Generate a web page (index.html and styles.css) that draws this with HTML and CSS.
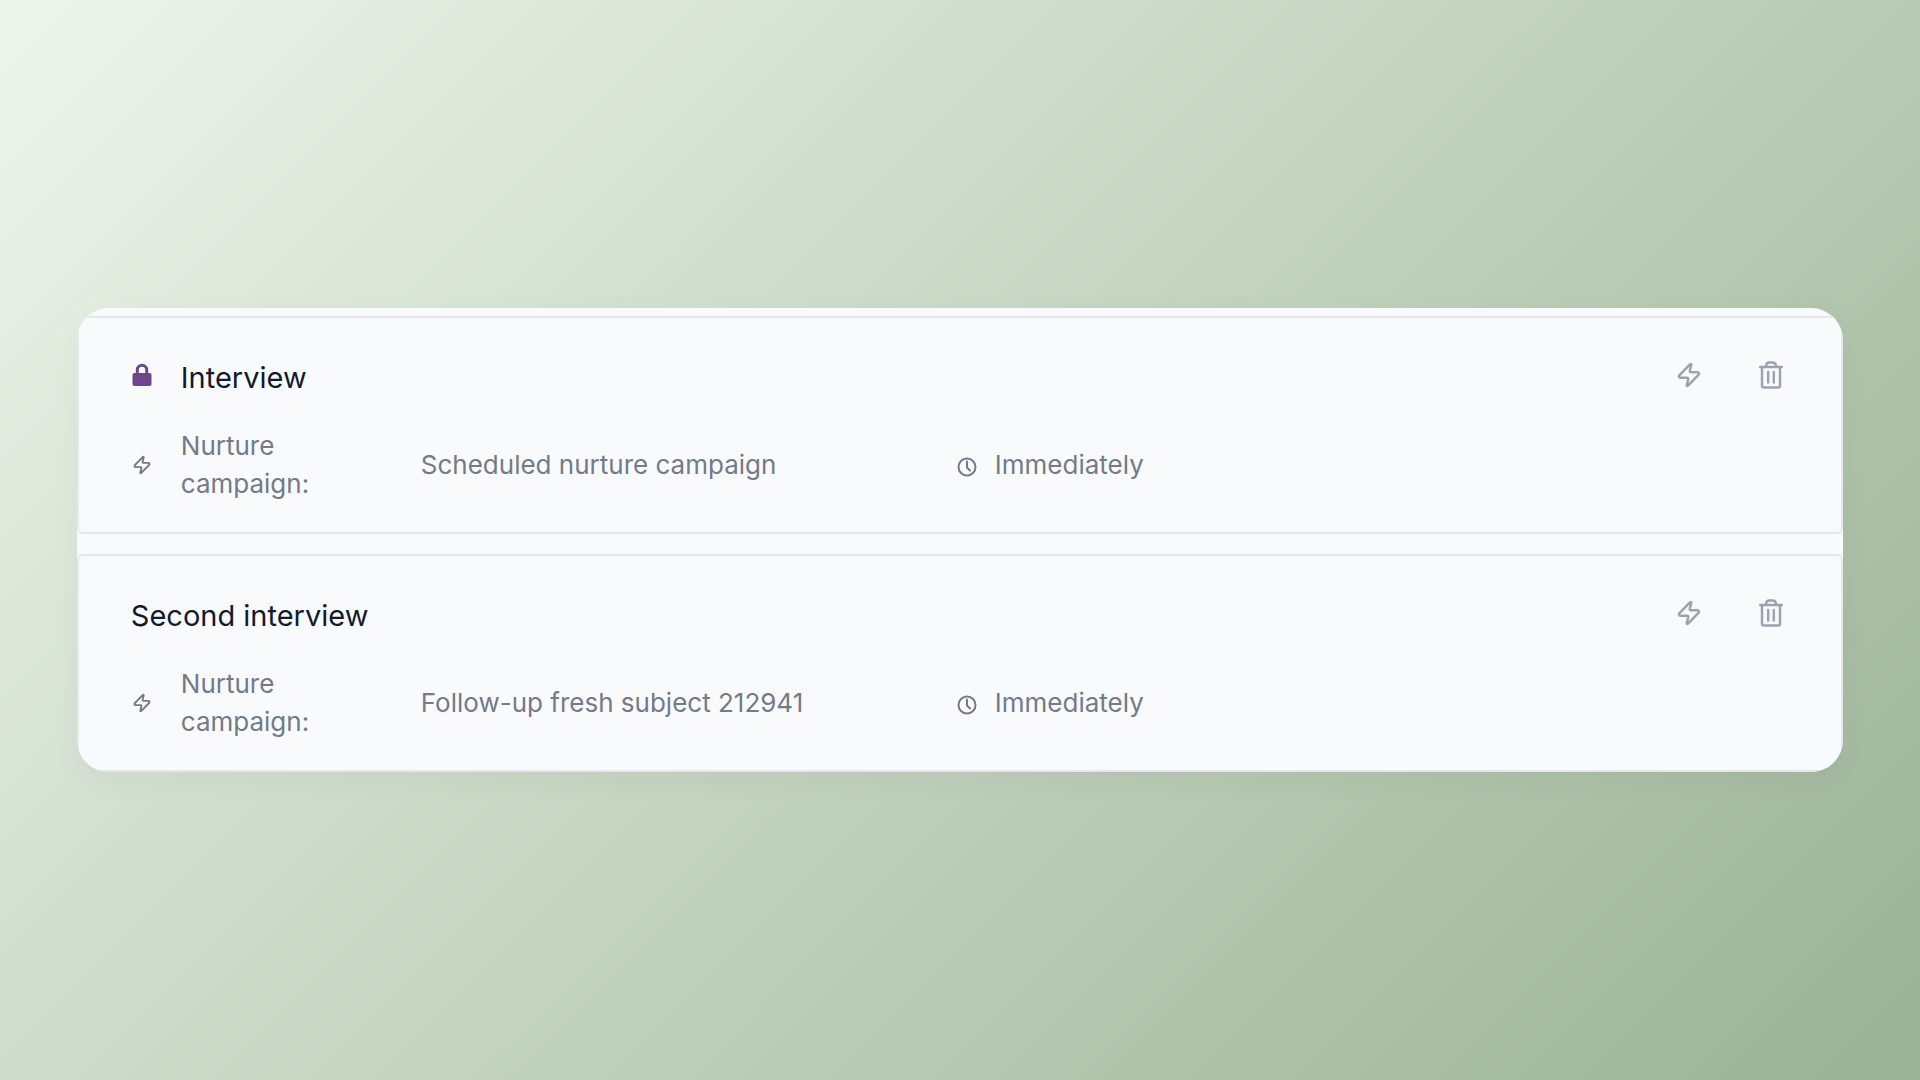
FILE: index.html
```html
<!DOCTYPE html>
<html lang="en">
<head>
<meta charset="utf-8">
<meta name="viewport" content="width=device-width, initial-scale=1">
<title>Hiring stages</title>
<link rel="stylesheet" href="styles.css">
</head>
<body>
<svg class="sprite" aria-hidden="true">
  <symbol id="bolt" viewBox="0 0 24 26">
    <path d="M13.200 2.200 L2.300 13.300 Q1.300 15.500 3.500 15.800 H10.200 Q11.600 16 11.200 17.400 L9.700 23.300 Q9.800 24.400 10.800 23.800 L21.700 12.700 Q22.700 10.500 20.500 10.200 H13.800 Q12.400 10 12.800 8.600 L14.300 2.700 Q14.200 1.600 13.200 2.200 Z" fill="none" stroke="currentColor" stroke-width="2.500" stroke-linejoin="round"/>
  </symbol>
  <symbol id="trash" viewBox="0 0 24 28">
    <path d="M1.200 6H22.800M3 6.500V24.500a2 2 0 0 0 2 2H19a2 2 0 0 0 2-2V6.500M7 5.500C7 3 8.500 1.500 10.500 1.500H13.500C15.500 1.500 17 3 17 5.500M9.200 11V21.500M14.800 11V21.500" fill="none" stroke="currentColor" stroke-width="2.500" stroke-linecap="round"/>
  </symbol>
  <symbol id="clock" viewBox="0 0 20 20">
    <circle cx="10" cy="10" r="8.500" fill="none" stroke="currentColor" stroke-width="2"/>
    <path d="M10 4.500V10.500L13 13.500" fill="none" stroke="currentColor" stroke-width="2" stroke-linecap="round"/>
  </symbol>
  <symbol id="lock" viewBox="0 0 20 24">
    <path d="M5.300 11V7a4.700 4.700 0 0 1 9.400 0V11" fill="none" stroke="currentColor" stroke-width="3"/>
    <rect x="0.500" y="10" width="19" height="13" rx="2" fill="currentColor"/>
  </symbol>
</svg>
<main class="panel">
  <section class="card">
    <header class="card-header">
      <svg class="lock" role="img" aria-label="Locked"><use href="#lock"/></svg>
      <h2 class="title">Interview</h2>
      <div class="actions">
        <button class="action" type="button" aria-label="Add automation"><svg class="action-bolt"><use href="#bolt"/></svg></button>
        <button class="action" type="button" aria-label="Delete stage"><svg class="action-trash"><use href="#trash"/></svg></button>
      </div>
    </header>
    <div class="meta">
      <svg class="meta-bolt" aria-hidden="true"><use href="#bolt"/></svg>
      <span class="label">Nurture campaign:</span>
      <span class="name">Scheduled nurture campaign</span>
      <span class="timing"><svg class="clock" aria-hidden="true"><use href="#clock"/></svg>Immediately</span>
    </div>
  </section>
  <section class="card">
    <header class="card-header">
      <h2 class="title">Second interview</h2>
      <div class="actions">
        <button class="action" type="button" aria-label="Add automation"><svg class="action-bolt"><use href="#bolt"/></svg></button>
        <button class="action" type="button" aria-label="Delete stage"><svg class="action-trash"><use href="#trash"/></svg></button>
      </div>
    </header>
    <div class="meta">
      <svg class="meta-bolt" aria-hidden="true"><use href="#bolt"/></svg>
      <span class="label">Nurture campaign:</span>
      <span class="name">Follow-up fresh subject 212941</span>
      <span class="timing"><svg class="clock" aria-hidden="true"><use href="#clock"/></svg>Immediately</span>
    </div>
  </section>
</main>
</body>
</html>
```
FILE: styles.css
```css
* { box-sizing: border-box; }

body {
  margin: 0;
  min-height: 100vh;
  display: flex;
  align-items: center;
  justify-content: center;
  font-family: Inter, "Liberation Sans", sans-serif;
  background: linear-gradient(135deg, #edf5eb, #9ab295);
}

.sprite { position: absolute; width: 0; height: 0; }

.panel {
  width: 92%;
  padding-top: 8px;
  display: flex;
  flex-direction: column;
  gap: 20px;
  background: #f9fafc;
  border-radius: 32px;
  overflow: hidden;
  box-shadow: 0 8px 32px rgba(0, 0, 0, 0.04);
}

.card {
  padding: 35px 52px 29px;
  border: 2px solid #e5e7eb;
  border-radius: 6px;
}

.card-header {
  display: flex;
  align-items: center;
  height: 44px;
}

.lock {
  width: 20px;
  height: 24px;
  margin: 0 29px 0 1px;
  color: #6f458c;
}

.title {
  margin: 6px 0 0;
  font-size: 29px;
  font-weight: 400;
  line-height: 40px;
  color: #111a2e;
}

.actions {
  display: flex;
  gap: 46px;
  margin-left: auto;
}

.action {
  display: flex;
  align-items: center;
  justify-content: center;
  width: 36px;
  height: 36px;
  padding: 0;
  border: 0;
  background: none;
  color: #9ca3af;
}

.action-bolt { width: 24px; height: 26px; }
.action-trash { width: 24px; height: 28px; }

.meta {
  display: grid;
  grid-template-columns: 50px 240px 536px 1fr;
  align-items: center;
  margin-top: 30px;
  font-size: 26px;
  line-height: 38px;
  color: #737a89;
}

.meta-bolt { width: 18px; height: 20px; margin-left: 2px; }

.label { width: 160px; }

.timing {
  display: flex;
  align-items: center;
  gap: 18px;
}

.clock { width: 20px; height: 20px; margin-top: 4px; }
```
